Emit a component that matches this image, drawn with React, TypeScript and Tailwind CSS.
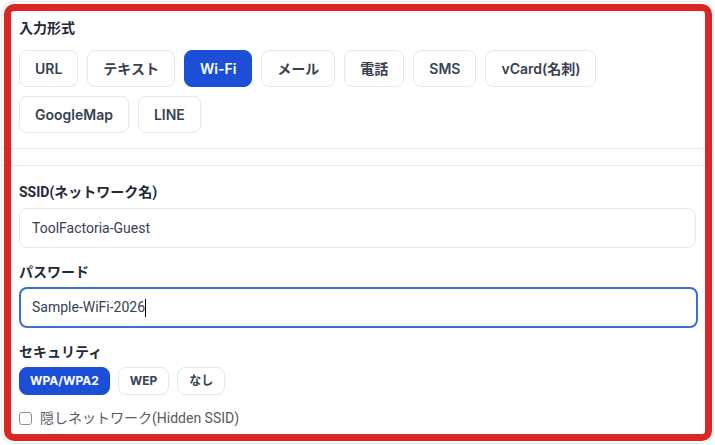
import React from "react";

const FONT = { fontFamily: 'Roboto, "Noto Sans CJK JP", sans-serif' };
const BTN_FONT = { fontFamily: 'Inter, "Noto Sans CJK JP", sans-serif' };

const types = ["URL", "テキスト", "Wi-Fi", "メール", "電話", "SMS", "vCard(名刺)", "GoogleMap", "LINE"];

export default function App() {
  return (
    <div className="w-[715px] h-[445px] bg-white p-px relative overflow-hidden" style={FONT}>
      <div className="w-[713px] h-[443px] border border-[#e9eaee] rounded-xl overflow-hidden bg-white">
        {/* Section 1 */}
        <div className="px-[17px] pt-[16px] pb-[15px] border-b border-[#e8e9ed]">
          <div className="text-[14px] leading-5 font-bold text-[#1f2937]">入力形式</div>
          <div className="mt-[12px] flex flex-wrap gap-x-[9px] gap-y-[9px] w-[600px]" style={BTN_FONT}>
            {types.map((t) => {
              const active = t === "Wi-Fi";
              return (
                <div
                  key={t}
                  className={
                    active
                      ? "h-[37px] px-[15px] flex items-center rounded-lg border border-[#1d4ed8] bg-[#1d4ed8] text-white text-[14px] font-semibold"
                      : "h-[37px] px-[15px] flex items-center rounded-lg border border-[#e5e7eb] bg-white text-[#374151] text-[14px] font-semibold"
                  }
                >
                  {t}
                </div>
              );
            })}
          </div>
        </div>
        <div className="h-[16px]" />
        {/* Section 2 */}
        <div className="border-t border-[#e8e9ed] px-[17px] pt-[16px]">
          <div className="text-[14px] leading-5 font-bold text-[#1f2937]">SSID(ネットワーク名)</div>
          <div className="mt-[6px] h-[40px] w-[677px] rounded-lg border border-[#e5e7eb] flex items-center px-[12px] text-[14px] text-[#374151]">
            ToolFactoria-Guest
          </div>
          <div className="mt-[14px] text-[14px] leading-5 font-bold text-[#1f2937]">パスワード</div>
          <div className="mt-[5px] h-[41px] w-[679px] rounded-lg border-2 border-[#3b6fd6] flex items-center px-[11px] text-[14px] text-[#374151]">
            <span>Sample-WiFi-2026</span>
            <span className="w-px h-[18px] bg-black" />
          </div>
          <div className="mt-[14px] text-[14px] leading-5 font-bold text-[#1f2937]">セキュリティ</div>
          <div className="mt-[5px] flex gap-[8px]" style={BTN_FONT}>
            <div className="h-[28px] px-[10px] flex items-center rounded-lg bg-[#1d4ed8] border border-[#1d4ed8] text-white text-[12px] font-bold">WPA/WPA2</div>
            <div className="h-[28px] px-[11px] flex items-center rounded-lg bg-white border border-[#e5e7eb] text-[#374151] text-[12px] font-bold">WEP</div>
            <div className="h-[28px] px-[11px] flex items-center rounded-lg bg-white border border-[#e5e7eb] text-[#374151] text-[12px] font-bold">なし</div>
          </div>
          <div className="mt-[13px] flex items-center gap-[8px] h-5">
            <div className="w-[13px] h-[13px] border border-[#8b8f96] rounded-[3px] bg-white" />
            <span className="text-[14px] text-[#555b63]">隠しネットワーク(Hidden SSID)</span>
          </div>
        </div>
      </div>
      {/* red annotation overlay */}
      <div className="absolute left-[4px] top-[4px] w-[708px] h-[437px] border-[7px] border-[#dc2626] rounded-[10px] pointer-events-none" />
    </div>
  );
}
